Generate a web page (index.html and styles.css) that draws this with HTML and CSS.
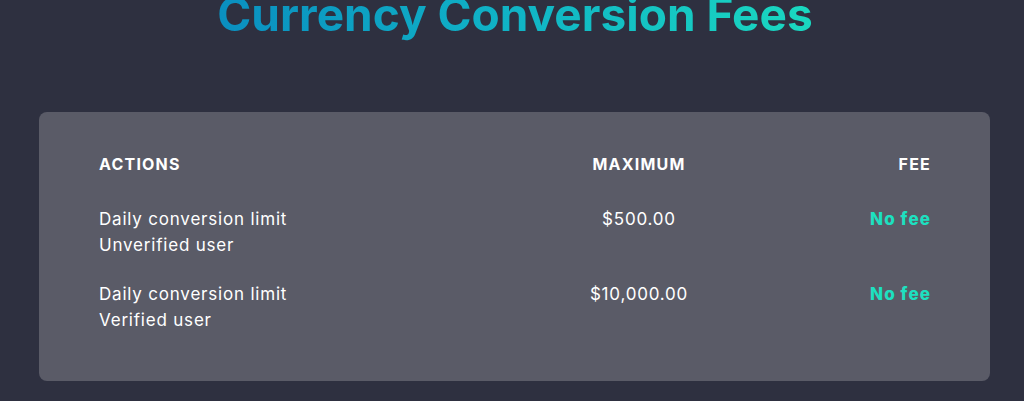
FILE: index.html
```html
<!DOCTYPE html>
<html lang="en">
<head>
<meta charset="utf-8">
<title>Currency Conversion Fees</title>
<link rel="stylesheet" href="styles.css">
</head>
<body>
<main class="page">
  <h1 class="title">Currency Conversion Fees</h1>
  <section class="card">
    <div class="table">
      <div class="th">ACTIONS</div>
      <div class="th center">MAXIMUM</div>
      <div class="th right">FEE</div>

      <div class="td">Daily conversion limit<br>Unverified user</div>
      <div class="td center">$500.00</div>
      <div class="td right fee">No fee</div>

      <div class="td">Daily conversion limit<br>Verified user</div>
      <div class="td center">$10,000.00</div>
      <div class="td right fee">No fee</div>
    </div>
  </section>
</main>
</body>
</html>
```

FILE: styles.css
```css
html, body {
  margin: 0;
  padding: 0;
  background: #2e3040;
  height: 100%;
  overflow: hidden;
}
body {
  font-family: Inter, "Liberation Sans", sans-serif;
  color: #ffffff;
}
.page {
  display: flex;
  flex-direction: column;
  align-items: center;
}
.title {
  margin: -14px 0 0 6px;
  font-size: 46px;
  line-height: 56px;
  font-weight: 700;
  background: linear-gradient(90deg, #0a8fc0 0%, #10b4c6 50%, #1ad8c0 100%);
  -webkit-background-clip: text;
  background-clip: text;
  color: transparent;
  letter-spacing: 0;
}
.card {
  margin-top: 70px;
  width: 951px;
  height: 269px;
  box-sizing: border-box;
  align-self: flex-start;
  margin-left: 39px;
  background: #5a5b67;
  border-radius: 8px;
  padding: 42px 60px 50px;
}
.table {
  display: grid;
  grid-template-columns: 440px 200px 1fr;
  row-gap: 23px;
}
.th {
  font-size: 16px;
  font-weight: 700;
  line-height: 20px;
  letter-spacing: 1.2px;
  margin-bottom: 9px;
}
.th.right, .fee.right {
  margin-right: -1px;
}
.td {
  font-size: 17px;
  line-height: 26px;
  font-weight: 400;
  letter-spacing: 0.8px;
}
.center { text-align: center; }
.right { text-align: right; }
.fee {
  color: #1de0c0;
  font-weight: 800;
  letter-spacing: 1.1px;
}
```
